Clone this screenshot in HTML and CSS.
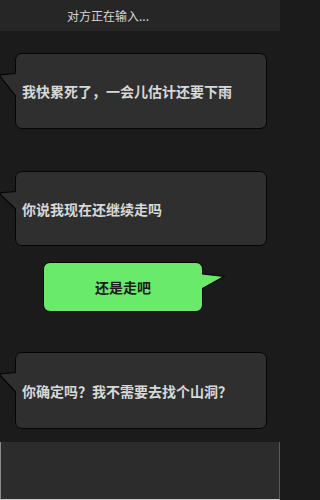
FILE: index.html
```html
<!DOCTYPE html>
<html lang="zh">
<head>
<meta charset="utf-8">
<link rel="stylesheet" href="styles.css">
</head>
<body>
<div class="screen">
  <header class="topbar">对方正在输入...</header>
  <main class="chat">
    <div class="bubble left b1">
      <svg class="tail-left" viewBox="0 0 18 30" width="18" height="30"><polygon points="18,3.5 0,5 18,27" fill="#2f2f2f"/><polyline points="16.5,3.5 0,5 16.5,26" fill="none" stroke="#050505" stroke-width="1.2"/></svg>
      <span>我快累死了，一会儿估计还要下雨</span>
    </div>
    <div class="bubble left b2">
      <svg class="tail-left" viewBox="0 0 18 30" width="18" height="30"><polygon points="18,3.5 0,5 18,22" fill="#2f2f2f"/><polyline points="16.5,3.5 0,5 16.5,21" fill="none" stroke="#050505" stroke-width="1.2"/></svg>
      <span>你说我现在还继续走吗</span>
    </div>
    <div class="bubble right">
      <svg class="tail-right" viewBox="0 0 24 20" width="24" height="20"><polygon points="0,2 23,4.5 0,17" fill="#6aea6a"/><polyline points="1.5,2 23,4.5 1.5,16.5" fill="none" stroke="#050505" stroke-width="1.2"/></svg>
      <span>还是走吧</span>
    </div>
    <div class="bubble left b4">
      <svg class="tail-left" viewBox="0 0 18 30" width="18" height="30"><polygon points="18,3.5 0,5 18,24" fill="#2f2f2f"/><polyline points="16.5,3.5 0,5 16.5,23" fill="none" stroke="#050505" stroke-width="1.2"/></svg>
      <span>你确定吗？我不需要去找个山洞？</span>
    </div>
  </main>
  <footer class="bottom"></footer>
</div>
</body>
</html>
```
FILE: styles.css
```css
html, body {
  margin: 0;
  padding: 0;
  background: #1b1b1b;
}
body {
  width: 280px;
  height: 500px;
  overflow: hidden;
  font-family: "Noto Sans CJK SC", "Noto Sans", sans-serif;
}
.screen {
  display: flex;
  flex-direction: column;
  width: 280px;
  height: 500px;
}
.topbar {
  height: 31px;
  flex: none;
  box-sizing: border-box;
  background: #262626;
  color: #d6d6d6;
  font-size: 12px;
  padding-left: 67px;
  padding-top: 1px;
  line-height: 30px;
}
.chat {
  flex: none;
  height: 411px;
  box-sizing: border-box;
  background: #1b1b1b;
  padding-top: 22px;
  display: flex;
  flex-direction: column;
}
.bubble {
  position: relative;
  box-sizing: border-box;
  border: 1px solid #050505;
  border-radius: 7px;
  display: flex;
  align-items: center;
  font-size: 14px;
  font-weight: bold;
}
.bubble.left {
  margin-left: 15px;
  width: 252px;
  background: #2f2f2f;
  color: #d8d8d8;
  padding-left: 6px;
}
.b1 {
  height: 76px;
}
.b2 {
  height: 75px;
  margin-top: 42px;
}
.bubble.right {
  margin-top: 16px;
  margin-left: 43px;
  width: 160px;
  height: 50px;
  background: #6aea6a;
  color: #1c1c1c;
  justify-content: center;
}
.b4 {
  height: 77px;
  margin-top: 40px;
}
.tail-left {
  position: absolute;
  left: -17px;
  top: 16px;
  display: block;
}
.tail-right {
  position: absolute;
  right: -23px;
  top: 9px;
  display: block;
}
.bottom {
  flex: 1;
  background: #2c2c2c;
  border-left: 1px solid #8a8a8a;
  border-right: 1px solid #5a5a5a;
  border-bottom: 1px solid #cfcfcf;
}
```
